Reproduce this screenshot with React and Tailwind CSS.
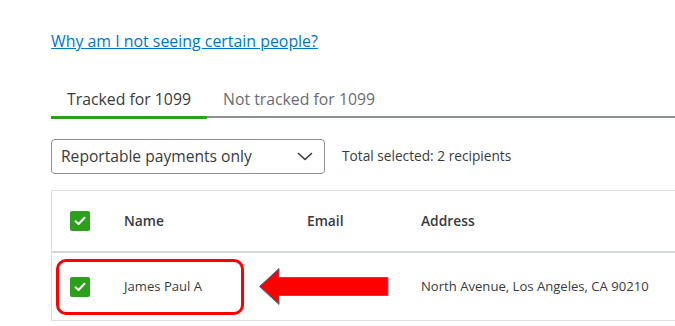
import React from 'react'

const FONT = { fontFamily: '"Open Sans", "Noto Sans", Arial, sans-serif' }

function Check() {
  return (
    <span className="flex h-[20px] w-[20px] items-center justify-center rounded-[2px] bg-[#2ca01c]">
      <svg width="12" height="10" viewBox="0 0 12 10" fill="none">
        <path d="M1.5 5.2 L4.6 8 L10.5 1.8" stroke="white" strokeWidth="2" strokeLinecap="round" strokeLinejoin="round" />
      </svg>
    </span>
  )
}

export default function App() {
  return (
    <div className="relative h-[326px] w-[675px] overflow-hidden bg-white pl-[51px]" style={FONT}>
      <a href="#" className="mt-[31px] block h-[20px] text-[15.9px] leading-[20px] text-[#0077c5] underline">
        Why am I not seeing certain people?
      </a>

      {/* tabs */}
      <div className="mt-[33px] flex items-end border-b-2 border-[#8d9096]">
        <div className="-mb-[3px] flex h-[35px] w-[156px] items-center border-b-[3px] border-[#2ca01c] pl-[16px] text-[15.8px] text-[#393a3d]">
          Tracked for 1099
        </div>
        <div className="flex h-[32px] items-center pl-[16px] text-[15.8px] text-[#6b6c72]">
          Not tracked for 1099
        </div>
      </div>

      {/* filter */}
      <div className="mt-[21px] flex items-center">
        <div className="flex h-[35px] w-[274px] items-center justify-between rounded-[4px] border border-[#8d9096] pl-[9px] pr-[11px] text-[15.6px] text-[#393a3d]">
          <span>Reportable payments only</span>
          <svg width="16" height="9" viewBox="0 0 16 9" fill="none">
            <path d="M1.5 1.5 L8 7.5 L14.5 1.5" stroke="#393a3d" strokeWidth="1.6" strokeLinecap="round" strokeLinejoin="round" />
          </svg>
        </div>
        <span className="ml-[17px] text-[13.7px] text-[#393a3d]">Total selected: 2 recipients</span>
      </div>

      {/* table */}
      <div className="mt-[16px] border-l border-t border-[#dcdee1]">
        <div className="flex h-[62px] items-center border-b-2 border-[#d4d7dc] text-[13.8px] font-semibold text-[#393a3d]">
          <div className="w-[72px] pl-[18px]"><Check /></div>
          <div className="w-[183px]">Name</div>
          <div className="w-[114px]">Email</div>
          <div>Address</div>
        </div>
        <div className="flex h-[68px] items-center border-b border-[#dcdee1] text-[13.1px] text-[#393a3d]">
          <div className="w-[72px] pl-[18px]"><Check /></div>
          <div className="w-[183px]">James Paul A</div>
          <div className="w-[114px]"></div>
          <div>North Avenue, Los Angeles, CA 90210</div>
        </div>
      </div>

      {/* annotation overlay */}
      <div className="absolute left-[56px] top-[259px] h-[56px] w-[188px] rounded-[10px] border-[3px] border-[#ff0000]" />
      <svg className="absolute left-[258px] top-[267px]" width="132" height="39" viewBox="0 0 132 39">
        <path d="M1.5 19.5 L21 1.5 L21 10.5 L130 10.5 L130 28.5 L21 28.5 L21 37.5 Z" fill="#ff0000" stroke="#41719c" strokeWidth="1" />
      </svg>
    </div>
  )
}
